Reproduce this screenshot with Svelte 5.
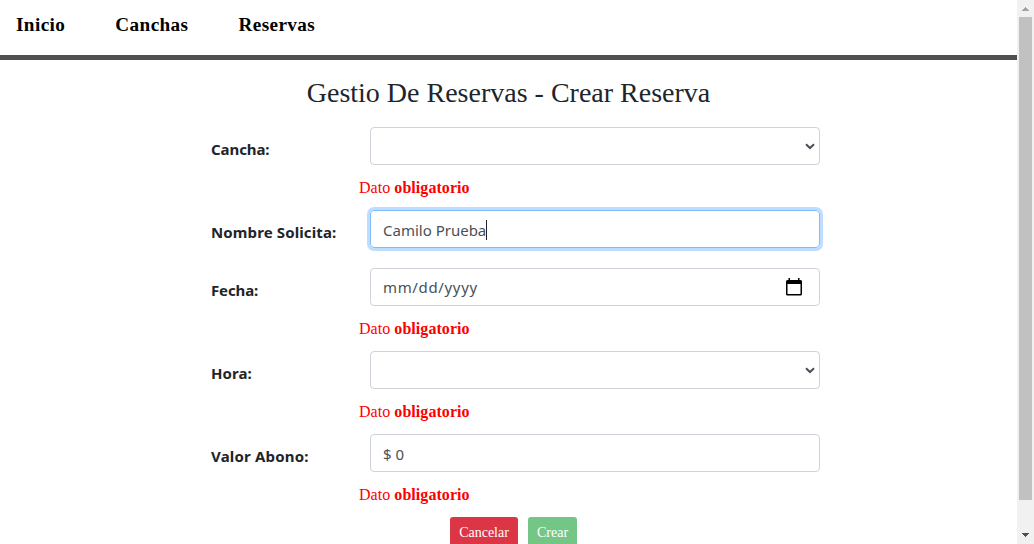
<script>
  const links = ['Inicio', 'Canchas', 'Reservas'];
  const fields = [
    { label: 'Cancha:', kind: 'select', error: true, spacing: -0.08 },
    { label: 'Nombre Solicita:', kind: 'text', value: 'Camilo Prueba', focused: true, spacing: 0.12 },
    { label: 'Fecha:', kind: 'date', value: 'mm/dd/yyyy', error: true, spacing: -0.12 },
    { label: 'Hora:', kind: 'select', error: true, spacing: 0.08 },
    { label: 'Valor Abono:', kind: 'text', value: '$ 0', error: true, spacing: 0.18 }
  ];
</script>

<div class="window">
  <div class="page">
    <nav>
      {#each links as link}<span class="link">{link}</span>{/each}
    </nav>
    <h3>Gestio De Reservas - Crear Reserva</h3>
    <form>
      {#each fields as f}
        <div class="row">
          <span class="label" style="letter-spacing: {f.spacing}px">{f.label}</span>
          <div class="control {f.kind}" class:focused={f.focused}>
            <span class="value">{f.value ?? ''}</span>
            {#if f.focused}<span class="caret"></span>{/if}
            {#if f.kind === 'select'}
              <svg class="chevron" width="10" height="7" viewBox="0 0 10 7"><path d="M1 1.2 5 5 9 1.2" fill="none" stroke="#495057" stroke-width="2" /></svg>
            {/if}
            {#if f.kind === 'date'}
              <svg class="calendar" width="16" height="18" viewBox="0 0 16 18"><path d="M2.500 0h1.500v2h8V0h1.500v2h1Q16 2 16 3.500v12.500Q16 17.500 14.500 17.500h-13Q0 17.500 0 16v-12.500Q0 2 1.500 2h1ZM1.500 6v10h13V6Z" fill="#000" fill-rule="evenodd" /></svg>
            {/if}
          </div>
        </div>
        {#if f.error}<div class="error">Dato <b>obligatorio</b></div>{/if}
      {/each}
    </form>
    <div class="actions">
      <span class="btn cancel">Cancelar</span>
      <span class="btn create">Crear</span>
    </div>
  </div>
  <div class="scrollbar">
    <svg width="17" height="17" viewBox="0 0 17 17" shape-rendering="crispEdges"><path d="M8 7h1v1h1v1h1v1h1v1H5v-1h1V9h1V8h1Z" fill="#a3a3a3" /></svg>
    <div class="thumb"></div>
    <svg class="down" width="17" height="17" viewBox="0 0 17 17" shape-rendering="crispEdges"><path d="M5 6h7v1h-1v1h-1v1H9v1H8V9H7V8H6V7H5Z" fill="#505050" /></svg>
  </div>
</div>

<style>
  :global(body) { overflow: hidden; background: #fff; }
  .window { display: flex; height: 544px; overflow: hidden; font-family: "Liberation Serif", "Times New Roman", serif; }
  .page { flex: 1; min-width: 0; overflow: hidden; }
  nav { box-sizing: border-box; height: 60px; border-bottom: 5px solid #504e4e; padding: 13px 16px 0; display: flex; gap: 50px; }
  .link { font-size: 19.2px; line-height: 24px; font-weight: 700; color: #000; letter-spacing: 0.4px; }
  h3 { margin: 16px 0 0; height: 51px; font-size: 28px; line-height: 34px; font-weight: 400; text-align: center; color: #212529; white-space: nowrap; }
  form { width: 609px; margin-left: 211px; }
  .row { display: flex; height: 38px; margin-bottom: 20px; }
  .label { width: 159px; flex: none; padding-top: 10px; font: 700 15px/24px "Noto Sans", sans-serif; color: #212529; white-space: nowrap; }
  .control { box-sizing: border-box; width: 450px; height: 38px; border: 1px solid #ced4da; border-radius: 4px; padding: 1px 12px 0; display: flex; align-items: center; color: #495057; font: 400 15px/24px "Noto Sans", sans-serif; }
  .date { padding-top: 0; padding-bottom: 1px; }
  .date .value { letter-spacing: 0.65px; }
  .focused { border-color: #80bdff; box-shadow: 0 0 0 3px #bfdeff; }
  .caret { width: 1px; height: 20px; background: #212529; }
  .chevron { margin-left: auto; margin-right: -8px; }
  .calendar { margin-left: auto; margin-right: 5px; margin-bottom: -1px; }
  .error { height: 25px; margin: -10px 0 10px 148px; line-height: 26px; font-size: 16px; letter-spacing: 0.05px; color: #f00; white-space: nowrap; }
  .actions { display: flex; gap: 10px; margin-left: 450px; }
  .btn { box-sizing: border-box; height: 31px; border-radius: 3px; color: #fff; font-size: 14px; line-height: 31px; text-align: center; }
  .cancel { width: 68px; background: #dc3545; }
  .create { width: 49px; background: #74c686; }
  .scrollbar { width: 17px; flex: none; height: 544px; background: #f1f1f1; display: flex; flex-direction: column; }
  .scrollbar svg { display: block; flex: none; }
  .thumb { width: 13px; height: 483px; margin-left: 2px; background: #c1c1c1; }
  .scrollbar .down { margin-top: auto; }
</style>
